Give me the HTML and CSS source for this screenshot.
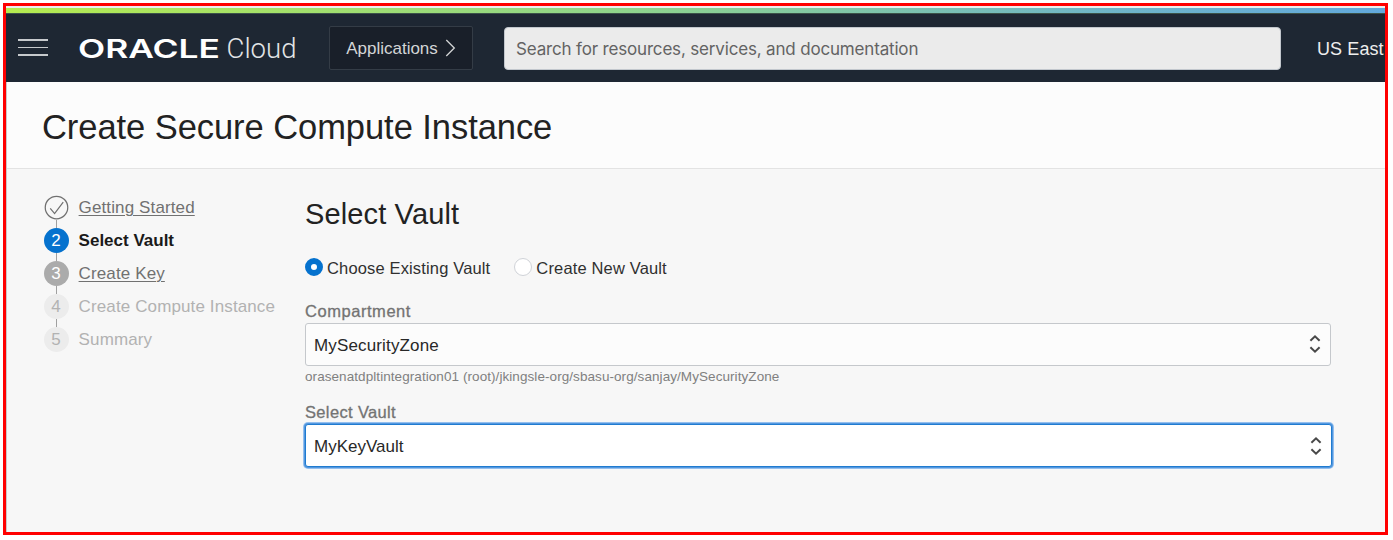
FILE: index.html
```html
<!DOCTYPE html>
<html lang="en">
<head>
<meta charset="utf-8">
<title>Create Secure Compute Instance</title>
<link rel="stylesheet" href="styles.css">
</head>
<body>
<div class="frame">
  <div class="accent"></div>
  <header class="topbar">
    <div class="menu"><span></span><span></span><span></span></div>
    <svg class="logo" width="220" height="30" viewBox="0 0 220 30">
      <text class="logo-brand" x="-1" y="24.500" textLength="142" lengthAdjust="spacingAndGlyphs">ORACLE</text>
      <text class="logo-product" x="147.500" y="24.500" textLength="70" lengthAdjust="spacingAndGlyphs">Cloud</text>
    </svg>
    <div class="apps"><span>Applications</span>
      <svg width="11" height="18" viewBox="0 0 11 18"><path d="M1.300 1L9.300 9L1.300 17" fill="none" stroke="#d3d5d6" stroke-width="1.300"/></svg>
    </div>
    <div class="search"><span>Search for resources, services, and documentation</span></div>
    <div class="region">US East</div>
  </header>
  <div class="titlebar"><h1>Create Secure Compute Instance</h1></div>
  <main class="content">
    <ol class="steps">
      <li class="step visited"><i class="dot check"><svg width="26" height="26" viewBox="0 0 26 26"><circle cx="13" cy="13" r="11.700" fill="none" stroke="#707070" stroke-width="1.300"/><path d="M6.500 14L11 19.300L20 7.500" fill="none" stroke="#707070" stroke-width="1.300"/></svg></i><a>Getting Started</a></li>
      <li class="step current"><i class="dot">2</i><b>Select Vault</b></li>
      <li class="step next"><i class="dot">3</i><a>Create Key</a></li>
      <li class="step"><i class="dot">4</i><span>Create Compute Instance</span></li>
      <li class="step"><i class="dot">5</i><span>Summary</span></li>
    </ol>
    <section class="form">
      <h2>Select Vault</h2>
      <div class="radios">
        <div class="option"><i class="radio on"></i><span>Choose Existing Vault</span></div>
        <div class="option"><i class="radio"></i><span>Create New Vault</span></div>
      </div>
      <div class="label label-comp">Compartment</div>
      <div class="select"><span>MySecurityZone</span>
        <svg width="12" height="20" viewBox="0 0 12 20"><path d="M1.400 6.700L6 2.300L10.600 6.700M1.400 13.300L6 17.700L10.600 13.300" fill="none" stroke="#484848" stroke-width="2"/></svg>
      </div>
      <div class="hint">orasenatdpltintegration01 (root)/jkingsle-org/sbasu-org/sanjay/MySecurityZone</div>
      <div class="label label-vault">Select Vault</div>
      <div class="select focused"><span>MyKeyVault</span>
        <svg width="12" height="20" viewBox="0 0 12 20"><path d="M1.400 6.700L6 2.300L10.600 6.700M1.400 13.300L6 17.700L10.600 13.300" fill="none" stroke="#484848" stroke-width="2"/></svg>
      </div>
    </section>
  </main>
</div>
</body>
</html>
```
FILE: styles.css
```css
* { box-sizing: border-box; }
body { margin: 0; padding: 3px; background: #fff; font-family: "Liberation Sans", Arial, sans-serif; }
h1, h2, ol { margin: 0; padding: 0; font-weight: 400; }
i { font-style: normal; }
svg { display: block; flex: none; }
.frame { width: 1385px; height: 532px; border: 3px solid #f00; background: #f7f7f7; overflow: hidden; display: flex; flex-direction: column; white-space: nowrap; box-shadow: inset 1px 0 #c9c9c9; }
.accent { height: 8px; flex: none; border-top: 2px solid #eee; background: linear-gradient(90deg, #b5eb50, #8fd48c 45%, #6fb5c8 80%, #62a9dd); border-bottom: 1px solid #3b5248; }
.topbar { height: 68px; flex: none; background: #1e2733; display: flex; align-items: center; padding-left: 12px; color: #eee; }
.menu { width: 30px; display: flex; flex-direction: column; gap: 6px; margin-top: -1px; }
.menu span { height: 1.500px; background: #c7cacd; }
.logo { margin-left: 31px; overflow: visible; }
.logo-brand { font: 600 26px Inter, sans-serif; fill: #fff; }
.logo-product { font: 300 27px Roboto, "Liberation Sans", sans-serif; fill: #e3e5e7; }
.apps { width: 144px; height: 44px; margin-left: 30px; border: 1px solid #343c46; border-radius: 2px; background: #191f29; display: flex; align-items: center; justify-content: center; gap: 7px; font-size: 17px; color: #d3d5d6; }
.apps span { padding-top: 1px; }
.search { width: 777px; height: 43px; margin-left: 31px; flex: none; border: 1px solid #c2c7cd; border-radius: 4px; background: #ebebeb; padding: 2px 0 0 11px; display: flex; align-items: center; font: 17px Inter, sans-serif; letter-spacing: -.17px; color: #636363; }
.region { margin: 2px 0 0 36px; font-size: 18px; letter-spacing: .1px; }
.titlebar { height: 87px; flex: none; margin-left: 1px; background: #fcfcfc; border-bottom: 1px solid #e3e3e3; padding: 24px 0 0 35px; }
h1 { font-size: 34.500px; line-height: 42px; letter-spacing: -.06px; color: #222; }
.content { display: flex; padding: 25px 0 0 37.600px; }
.steps { width: 261.400px; padding-top: 1px; list-style: none; font-size: 17px; letter-spacing: 0.120px; color: #b2b2b2; }
.step { height: 33.100px; display: flex; align-items: flex-start; gap: 10px; line-height: 26px; }
.dot { position: relative; width: 25px; height: 25px; flex: none; border-radius: 50%; background: #ececec; text-align: center; line-height: 25px; letter-spacing: 0; }
.dot.check { background: none; }
.check svg { width: 25px; height: 25px; }
.step:not(:last-child) .dot::after { content: ""; position: absolute; left: 12px; top: 25px; width: 1.300px; height: 8px; background: #a0a0a0; }
.step a { color: #717171; text-decoration: underline; text-decoration-thickness: 1px; text-underline-offset: 2px; }
.current { color: #1a1a1a; letter-spacing: 0; }
.current .dot { background: #0572ce; color: #fff; }
.next .dot { background: #ababab; color: #fff; }
.form { width: 1027px; }
h2 { font-size: 29px; line-height: 34px; letter-spacing: .14px; padding-top: 3px; color: #222; }
.radios { display: flex; gap: 24px; margin-top: 23px; font-size: 16.500px; letter-spacing: .15px; color: #303030; }
.option { display: flex; gap: 4px; line-height: 29px; }
.radio { width: 18px; height: 18px; margin-top: 4px; border: 1.500px solid #d0d3d8; border-radius: 50%; background: #fff; }
.radio.on { border: 6px solid #0572ce; }
.label { font-size: 16.500px; line-height: 20px; letter-spacing: .55px; color: #737373; -webkit-text-stroke: .3px #737373; }
.label-comp { margin: 18px 0 2px; }
.label-vault { margin-bottom: 2px; letter-spacing: .35px; }
.select { width: 1026px; height: 43px; border: 1px solid #c5c8cc; border-radius: 3px; background: #fcfcfc; display: flex; align-items: center; justify-content: space-between; padding: 0 9px 1px 8px; font-size: 17px; letter-spacing: .15px; color: #282828; }
.select span { padding-top: 3px; }
.hint { font-size: 13.500px; line-height: 16px; letter-spacing: .07px; margin: 3px 0 17px; color: #808080; }
.focused { width: 1027px; padding-top: 1px; border-color: #1f7bd0; background: #fff; box-shadow: 0 0 0 1px #5297df, 0 0 0 2px #94bfee; }
.focused span { letter-spacing: 0; padding-top: 2px; }
```
